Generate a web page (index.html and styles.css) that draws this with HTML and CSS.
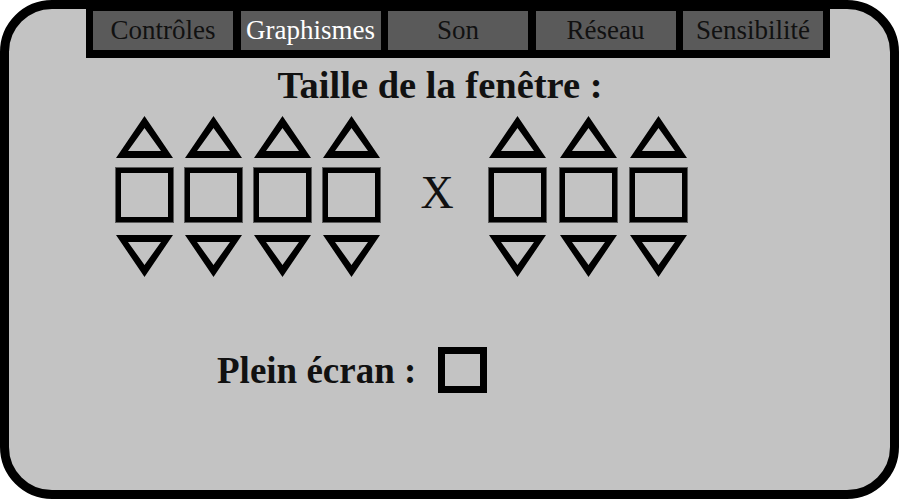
FILE: index.html
```html
<!DOCTYPE html>
<html lang="fr">
<head>
<meta charset="utf-8">
<title>Graphismes</title>
<link rel="stylesheet" href="styles.css">
</head>
<body>
<div class="frame">
  <div class="tabbar">
    <div class="tab">Contrôles</div>
    <div class="tab tab-active">Graphismes</div>
    <div class="tab">Son</div>
    <div class="tab">Réseau</div>
    <div class="tab">Sensibilité</div>
  </div>
  <div class="title">Taille de la fenêtre :</div>
  <div class="size-row">
    <div class="group group-w">
      <div class="spin"><svg class="tri" viewBox="0 0 57 42"><path fill-rule="evenodd" d="M0 42 L28.5 0 L57 42 Z M12 35 L28.5 12 L45 35 Z"/></svg><div class="digit"></div><svg class="tri tri-down" viewBox="0 0 57 42"><path fill-rule="evenodd" d="M0 0 L28.5 42 L57 0 Z M12 7 L28.5 30 L45 7 Z"/></svg></div>
      <div class="spin"><svg class="tri" viewBox="0 0 57 42"><path fill-rule="evenodd" d="M0 42 L28.5 0 L57 42 Z M12 35 L28.5 12 L45 35 Z"/></svg><div class="digit"></div><svg class="tri tri-down" viewBox="0 0 57 42"><path fill-rule="evenodd" d="M0 0 L28.5 42 L57 0 Z M12 7 L28.5 30 L45 7 Z"/></svg></div>
      <div class="spin"><svg class="tri" viewBox="0 0 57 42"><path fill-rule="evenodd" d="M0 42 L28.5 0 L57 42 Z M12 35 L28.5 12 L45 35 Z"/></svg><div class="digit"></div><svg class="tri tri-down" viewBox="0 0 57 42"><path fill-rule="evenodd" d="M0 0 L28.5 42 L57 0 Z M12 7 L28.5 30 L45 7 Z"/></svg></div>
      <div class="spin"><svg class="tri" viewBox="0 0 57 42"><path fill-rule="evenodd" d="M0 42 L28.5 0 L57 42 Z M12 35 L28.5 12 L45 35 Z"/></svg><div class="digit"></div><svg class="tri tri-down" viewBox="0 0 57 42"><path fill-rule="evenodd" d="M0 0 L28.5 42 L57 0 Z M12 7 L28.5 30 L45 7 Z"/></svg></div>
    </div>
    <div class="times">X</div>
    <div class="group group-h">
      <div class="spin"><svg class="tri" viewBox="0 0 57 42"><path fill-rule="evenodd" d="M0 42 L28.5 0 L57 42 Z M12 35 L28.5 12 L45 35 Z"/></svg><div class="digit"></div><svg class="tri tri-down" viewBox="0 0 57 42"><path fill-rule="evenodd" d="M0 0 L28.5 42 L57 0 Z M12 7 L28.5 30 L45 7 Z"/></svg></div>
      <div class="spin"><svg class="tri" viewBox="0 0 57 42"><path fill-rule="evenodd" d="M0 42 L28.5 0 L57 42 Z M12 35 L28.5 12 L45 35 Z"/></svg><div class="digit"></div><svg class="tri tri-down" viewBox="0 0 57 42"><path fill-rule="evenodd" d="M0 0 L28.5 42 L57 0 Z M12 7 L28.5 30 L45 7 Z"/></svg></div>
      <div class="spin"><svg class="tri" viewBox="0 0 57 42"><path fill-rule="evenodd" d="M0 42 L28.5 0 L57 42 Z M12 35 L28.5 12 L45 35 Z"/></svg><div class="digit"></div><svg class="tri tri-down" viewBox="0 0 57 42"><path fill-rule="evenodd" d="M0 0 L28.5 42 L57 0 Z M12 7 L28.5 30 L45 7 Z"/></svg></div>
    </div>
  </div>
  <div class="fullscreen-row">
    <span class="label">Plein écran :</span>
    <div class="checkbox"></div>
  </div>
</div>
</body>
</html>
```

FILE: styles.css
```css
html, body {
  margin: 0;
  padding: 0;
  background: #ffffff;
}

body {
  font-family: "Liberation Serif", "Times New Roman", serif;
  color: #111111;
}

.frame {
  box-sizing: border-box;
  width: 899px;
  height: 499px;
  border: 9px solid #000000;
  border-radius: 52px;
  background: #c3c3c3;
  display: flex;
  flex-direction: column;
  overflow: hidden;
}

.tabbar {
  box-sizing: border-box;
  margin-left: 77px;
  width: 744px;
  background: #000000;
  padding: 2px 7px 8px 7px;
  display: flex;
  gap: 7.5px;
}

.tab {
  width: 140px;
  height: 39px;
  background: #5a5a5a;
  color: #111111;
  font-size: 27px;
  line-height: 39px;
  text-align: center;
  white-space: nowrap;
}

.tab-active {
  color: #ffffff;
}

.title {
  margin-top: 9px;
  padding-right: 19px;
  font-size: 38.5px;
  line-height: 37px;
  font-weight: bold;
  text-align: center;
  color: #111111;
}

.size-row {
  margin-top: 12px;
  margin-left: 106px;
  display: flex;
  align-items: center;
}

.group {
  display: flex;
}

.group-w {
  gap: 10px;
}

.group-h {
  gap: 11.5px;
}

.spin {
  width: 59px;
  display: flex;
  flex-direction: column;
  align-items: center;
}

.tri {
  display: block;
  width: 57px;
  height: 42px;
  fill: #000000;
}

.tri-down {
  margin-top: 12px;
}

.digit {
  box-sizing: border-box;
  margin-top: 9px;
  width: 59px;
  height: 56px;
  border: 6px solid #000000;
  outline: 1px solid #5a5a5a;
  outline-offset: -1px;
}

.times {
  box-sizing: border-box;
  width: 107px;
  padding-left: 5px;
  margin-bottom: 7px;
  text-align: center;
  font-size: 46px;
  line-height: 46px;
  color: #111111;
}

.fullscreen-row {
  margin-top: 70px;
  margin-left: 208px;
  display: flex;
  align-items: center;
  gap: 22px;
}

.label {
  font-size: 37px;
  line-height: 37px;
  font-weight: bold;
  color: #111111;
  white-space: nowrap;
}

.checkbox {
  box-sizing: border-box;
  width: 49px;
  height: 46px;
  border: 7px solid #000000;
}
```
